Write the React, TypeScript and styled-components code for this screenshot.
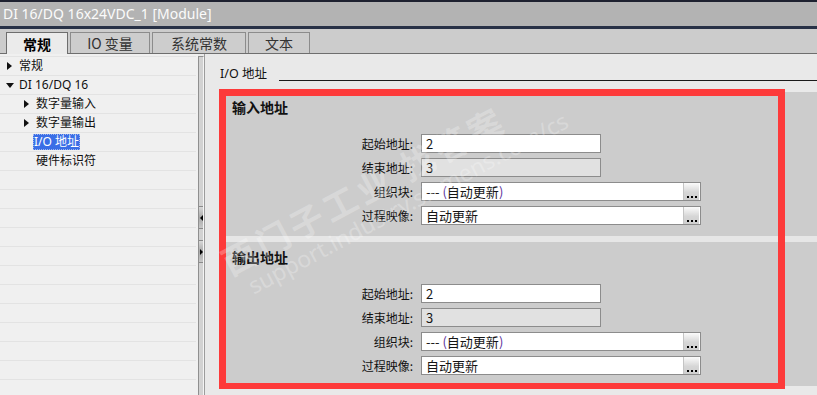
import React from 'react';
import styled, { createGlobalStyle, css } from 'styled-components';

const GlobalStyle = createGlobalStyle`
  html, body {
    margin: 0;
    padding: 0;
    background: #ebebeb;
  }
  body {
    font-family: "Noto Sans", "Noto Sans CJK SC", sans-serif;
    font-size: 12px;
    color: #111;
  }
`;

const Window = styled.div`
  width: 817px;
  height: 395px;
  display: flex;
  flex-direction: column;
  overflow: hidden;
  background: #ebebeb;
`;

const TopEdge = styled.div`
  height: 2px;
  background: #1e2130;
`;

const TitleBar = styled.div`
  height: 24px;
  line-height: 24px;
  padding-left: 3px;
  background: #b3b3b3;
  color: #fbfbfb;
  font-size: 14px;
  white-space: nowrap;
`;

const NavyLine = styled.div`
  height: 3px;
  background: #283146;
`;

const TabStrip = styled.div`
  height: 24px;
  display: flex;
  align-items: flex-end;
  gap: 2px;
  padding-left: 6px;
  background: #cccccc;
  border-bottom: 1px solid #6e6e6e;
`;

const Tab = styled.div<{ $active?: boolean; $w: number }>`
  width: ${({ $w }) => $w}px;
  height: 21px;
  box-sizing: border-box;
  display: flex;
  align-items: center;
  justify-content: center;
  font-family: "Noto Sans CJK SC", sans-serif;
  font-size: 14px;
  border: 1px solid #8c8c8c;
  border-bottom: none;
  background: #cdcdcd;
  color: #333;
  ${({ $active }) =>
    $active &&
    css`
      height: 22px;
      margin-bottom: -1px;
      background: #ebebeb;
      border-color: #6e6e6e;
      color: #000;
      font-weight: 700;
    `}
`;

const Body = styled.div`
  flex: 1;
  display: flex;
  min-height: 0;
`;

const Tree = styled.div`
  width: 198px;
  padding-top: 2px;
  background: #f0f0f0;
  overflow: hidden;
`;

const TreeRow = styled.div<{ $level: number }>`
  height: 18px;
  margin-right: 2px;
  border-top: 1px solid #e3e3e3;
  display: flex;
  align-items: center;
  padding-left: ${({ $level }) => ($level === 0 ? 6 : 23)}px;
  white-space: nowrap;
`;

const Caret = styled.span<{ $open?: boolean; $hidden?: boolean }>`
  width: 12px;
  flex: none;
  display: flex;
  align-items: center;
  &::before {
    content: '';
    width: 0;
    height: 0;
    visibility: ${({ $hidden }) => ($hidden ? 'hidden' : 'visible')};
    ${({ $open }) =>
      $open
        ? css`
            border-left: 4px solid transparent;
            border-right: 4px solid transparent;
            border-top: 5px solid #111;
          `
        : css`
            margin-left: 1px;
            border-top: 4px solid transparent;
            border-bottom: 4px solid transparent;
            border-left: 5px solid #111;
          `}
  }
`;

const TreeLabel = styled.span<{ $selected?: boolean }>`
  padding: 0 1px;
  line-height: 16px;
  ${({ $selected }) =>
    $selected &&
    css`
      margin-left: -2px;
      background: #3a6ee6;
      color: #fff;
      outline: 1px dotted #9db4f0;
      outline-offset: -1px;
    `}
`;

const Splitter = styled.div`
  width: 6px;
  margin-top: 2px;
  box-sizing: border-box;
  background: #d2d2d2;
  border-left: 1px solid #8f8f8f;
  border-top: 1px solid #8f8f8f;
  border-right: 1px solid #f4f4f4;
  padding-top: 149px;
  display: flex;
  flex-direction: column;
  gap: 11px;
`;

const SplitButton = styled.div<{ $dir: 'left' | 'right' }>`
  height: 23px;
  box-sizing: border-box;
  border-top: 1px solid #8a8a8a;
  border-bottom: 1px solid #8a8a8a;
  background: linear-gradient(to bottom, #d8d8d8, #a9a9a9 50%, #c7c7c7);
  display: flex;
  align-items: center;
  justify-content: center;
  &::before {
    content: '';
    width: 0;
    height: 0;
    border-top: 3px solid transparent;
    border-bottom: 3px solid transparent;
    ${({ $dir }) =>
      $dir === 'left'
        ? css`border-right: 3px solid #000;`
        : css`border-left: 3px solid #000;`}
  }
`;

const Main = styled.div`
  flex: 1;
  position: relative;
  border-left: 1px solid #9c9c9c;
  background: #e9e9e9;
  padding-top: 12px;
  overflow: hidden;
`;

const GroupHeader = styled.div`
  height: 16px;
  display: flex;
  align-items: flex-end;
  gap: 12px;
  padding-left: 15px;
  font-size: 12px;
`;

const HeaderText = styled.span`
  line-height: 16px;
  font-size: 12.5px;
`;

const HeaderRule = styled.div`
  flex: 1;
  height: 0;
  margin-bottom: 1px;
  border-bottom: 1px solid #1a1a1a;
`;

const Sections = styled.div`
  position: relative;
  margin: 10px 0 0 16px;
  display: flex;
  flex-direction: column;
  gap: 6px;
  background: #e6e6e6;

  &::after {
    content: '';
    position: absolute;
    top: -3px;
    left: -2px;
    width: 566px;
    height: 300px;
    box-sizing: border-box;
    border: 7px solid #fd3a3a;
    border-bottom-width: 6px;
    pointer-events: none;
    z-index: 2;
  }
`;

const Section = styled.div`
  height: 144px;
  box-sizing: border-box;
  background: #cccccc;
  padding: 5px 0 0 11px;
`;

const SectionTitle = styled.div`
  font-family: "Noto Sans CJK SC", sans-serif;
  font-size: 14px;
  font-weight: 700;
  line-height: 20px;
  margin-bottom: 17px;
`;

const FieldGrid = styled.div`
  display: grid;
  grid-template-columns: 181px auto;
  column-gap: 8px;
  row-gap: 5px;
  align-items: center;
`;

const FieldLabel = styled.div`
  text-align: right;
  font-family: "Noto Sans CJK SC", sans-serif;
  font-size: 12px;
  line-height: 19px;
`;

const Field = styled.div<{ $wide?: boolean; $readonly?: boolean }>`
  position: relative;
  width: ${({ $wide }) => ($wide ? 280 : 180)}px;
  height: 19px;
  box-sizing: border-box;
  border: 1px solid #8c8c8c;
  background: ${({ $readonly }) => ($readonly ? '#e1e1e1' : '#fff')};
  padding-left: 4px;
  font-family: "Noto Sans CJK SC", sans-serif;
  font-size: 13px;
  line-height: 17px;
  color: #151515;
  white-space: nowrap;
`;

const Paren = styled.span`
  color: #5a2f9a;
`;

const BrowseButton = styled.div`
  position: absolute;
  top: 0;
  right: 1px;
  width: 16px;
  height: 17px;
  background: linear-gradient(to bottom, #fbfbfb, #d6d6d6 55%, #cfcfcf);
  border-left: 1px solid #c4c4c4;
  display: flex;
  align-items: flex-end;
  justify-content: center;
  gap: 2px;
  padding-bottom: 2px;
  box-sizing: border-box;
`;

const Dot = styled.span`
  width: 2px;
  height: 2px;
  background: #000;
`;

const Watermark = styled.div`
  position: absolute;
  left: 40px;
  top: 186px;
  transform: rotate(-28deg);
  transform-origin: left bottom;
  color: rgba(255, 255, 255, 0.26);
  pointer-events: none;
  z-index: 3;
  white-space: nowrap;
`;

const MarkCn = styled.div`
  font-family: "Noto Sans CJK SC", sans-serif;
  font-size: 34px;
  font-weight: 700;
  letter-spacing: 4px;
  line-height: 38px;
`;

const MarkUrl = styled.div`
  font-family: "Noto Sans", sans-serif;
  font-size: 23px;
  line-height: 26px;
  padding-left: 12px;
`;

type TreeItem = { label: string; level: number; caret?: 'open' | 'closed'; selected?: boolean };

const treeItems: TreeItem[] = [
  { label: '常规', level: 0, caret: 'closed' },
  { label: 'DI 16/DQ 16', level: 0, caret: 'open' },
  { label: '数字量输入', level: 1, caret: 'closed' },
  { label: '数字量输出', level: 1, caret: 'closed' },
  { label: 'I/O 地址', level: 1, selected: true },
  { label: '硬件标识符', level: 1 },
];

const tabs = [
  { label: '常规', w: 62, active: true },
  { label: 'IO 变量', w: 80 },
  { label: '系统常数', w: 94 },
  { label: '文本', w: 62 },
];

const Browse = () => (
  <BrowseButton>
    <Dot />
    <Dot />
    <Dot />
  </BrowseButton>
);

const AddressSection: React.FC<{ title: string }> = ({ title }) => (
  <Section>
    <SectionTitle>{title}</SectionTitle>
    <FieldGrid>
      <FieldLabel>起始地址:</FieldLabel>
      <Field>2</Field>
      <FieldLabel>结束地址:</FieldLabel>
      <Field $readonly>3</Field>
      <FieldLabel>组织块:</FieldLabel>
      <Field $wide>
        --- <Paren>(</Paren>自动更新<Paren>)</Paren>
        <Browse />
      </Field>
      <FieldLabel>过程映像:</FieldLabel>
      <Field $wide>
        自动更新
        <Browse />
      </Field>
    </FieldGrid>
  </Section>
);

export default function App() {
  const fillerRows = Array.from({ length: 12 });
  return (
    <>
      <GlobalStyle />
      <Window>
        <TopEdge />
        <TitleBar>DI 16/DQ 16x24VDC_1 [Module]</TitleBar>
        <NavyLine />
        <TabStrip>
          {tabs.map((t) => (
            <Tab key={t.label} $w={t.w} $active={t.active}>
              {t.label}
            </Tab>
          ))}
        </TabStrip>
        <Body>
          <Tree>
            {treeItems.map((item) => (
              <TreeRow key={item.label} $level={item.level}>
                <Caret $open={item.caret === 'open'} $hidden={!item.caret} />
                <TreeLabel $selected={item.selected}>{item.label}</TreeLabel>
              </TreeRow>
            ))}
            {fillerRows.map((_, i) => (
              <TreeRow key={i} $level={0} />
            ))}
          </Tree>
          <Splitter>
            <SplitButton $dir="left" />
            <SplitButton $dir="right" />
          </Splitter>
          <Main>
            <GroupHeader>
              <HeaderText>I/O 地址</HeaderText>
              <HeaderRule />
            </GroupHeader>
            <Sections>
              <AddressSection title="输入地址" />
              <AddressSection title="输出地址" />
            </Sections>
            <Watermark>
              <MarkCn>西门子工业 找答案</MarkCn>
              <MarkUrl>support.industry.siemens.com/cs</MarkUrl>
            </Watermark>
          </Main>
        </Body>
      </Window>
    </>
  );
}
